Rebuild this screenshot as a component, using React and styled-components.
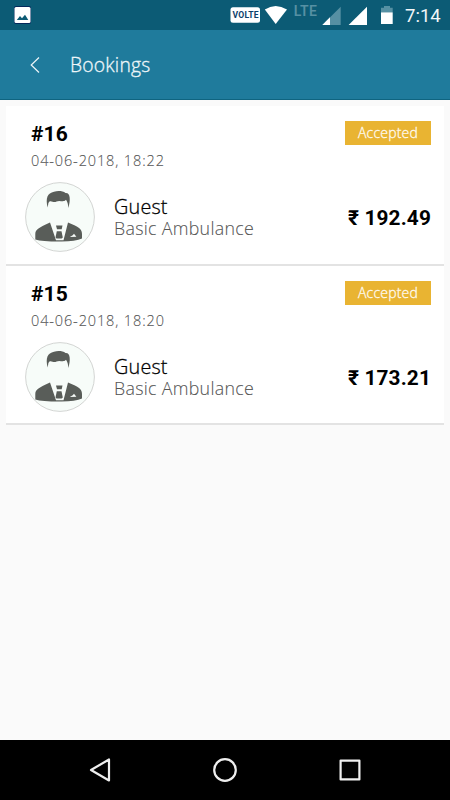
import React from "react";
import styled, { createGlobalStyle } from "styled-components";

const GlobalStyle = createGlobalStyle`
  * {
    box-sizing: border-box;
  }
  body {
    margin: 0;
    background: #fafafa;
    font-family: "Open Sans", "Noto Sans", sans-serif;
  }
`;

const Screen = styled.div`
  display: flex;
  flex-direction: column;
  width: 450px;
  height: 800px;
  overflow: hidden;
  background: #fafafa;
`;

const StatusBar = styled.div`
  display: flex;
  justify-content: space-between;
  height: 30px;
  flex-shrink: 0;
  background: #0c5b75;
`;

const StatusIcons = styled.svg`
  display: block;
`;

const StatusRight = styled.div`
  display: flex;
`;

const Clock = styled.div`
  width: 45px;
  color: #f2f7f9;
  font: 400 18.5px/32px Roboto, sans-serif;
  white-space: nowrap;
`;

const Toolbar = styled.header`
  display: flex;
  align-items: center;
  height: 70px;
  flex-shrink: 0;
  padding-left: 30px;
  background: #1f7b9c;
  border-bottom: 1px solid #0f6480;
`;

const BackIcon = styled.svg`
  width: 10px;
  height: 16px;
  margin-right: 30px;
`;

const Title = styled.h1`
  margin: 0;
  color: #eef6f9;
  font-size: 19.3px;
  font-weight: 300;
  line-height: 26px;
  letter-spacing: 0.2px;
  -webkit-text-stroke: 0.3px;
`;

const List = styled.main`
  flex: 1;
  padding: 6px 6px 0;
`;

const Card = styled.article`
  height: 159.5px;
  padding: 15px 13px 0 19px;
  background: #fff;
  border-bottom: 2px solid #e3e3e3;
`;

const Row = styled.div`
  display: flex;
  justify-content: space-between;
`;

const Heading = styled.div`
  padding-left: 6px;
`;

const BookingId = styled.div`
  color: #000;
  font: 700 21px/26px Roboto, sans-serif;
  letter-spacing: 0.1px;
`;

const BookingDate = styled.div`
  margin-top: 3px;
  color: #555;
  font-size: 14.5px;
  font-weight: 300;
  line-height: 21px;
  letter-spacing: 0.87px;
  -webkit-text-stroke: 0.1px;
`;

const Badge = styled.div`
  width: 86px;
  height: 24px;
  background: #e9b432;
  color: #fffaf0;
  font-size: 14px;
  font-weight: 300;
  line-height: 23px;
  letter-spacing: 0.2px;
  text-align: center;
  -webkit-text-stroke: 0.3px;
`;

const Details = styled.div`
  display: flex;
  align-items: center;
  margin-top: 11px;
`;

const Avatar = styled.svg`
  width: 70px;
  height: 70px;
  margin-right: 19px;
`;

const Person = styled.div`
  flex: 1;
`;

const Name = styled.div`
  color: #000;
  font-size: 19.8px;
  font-weight: 300;
  line-height: 22px;
  letter-spacing: 0.2px;
  padding-top: 1px;
  -webkit-text-stroke: 0.3px;
`;

const Service = styled.div`
  color: #555;
  font-size: 17.8px;
  font-weight: 300;
  line-height: 21px;
  letter-spacing: 0.3px;
  -webkit-text-stroke: 0.1px;
`;

const Price = styled.div`
  padding-top: 2px;
  color: #000;
  font: 700 20.8px/24px Roboto, sans-serif;
  letter-spacing: 0.15px;
  white-space: nowrap;
`;

const NavBar = styled.nav`
  display: flex;
  align-items: center;
  justify-content: space-between;
  height: 60px;
  flex-shrink: 0;
  padding: 0 87px;
  background: #000;
`;

const NavIcon = styled.svg`
  width: 26px;
  height: 26px;
  fill: none;
  stroke: #eee;
  stroke-width: 2.2;
  stroke-linejoin: round;
`;

const SvgLabel = styled.text`
  font-family: Roboto, sans-serif;
  font-weight: ${(props) => props.$weight};
  font-size: ${(props) => props.$size}px;
`;

const bookings = [
  { id: 16, date: "04-06-2018, 18:22", price: "192.49" },
  { id: 15, date: "04-06-2018, 18:20", price: "173.21" },
];

const GuestAvatar = () => (
  <Avatar viewBox="0 0 70 70">
    <circle cx="35" cy="35" r="34.4" fill="#f7fcf9" stroke="#d3d5d3" />
    <g fill="#595d59">
      <path d="M22.7 25.5C20.3 16 22.5 11 29 9.7C33 8.5 38 9 40.5 10.9C45.5 10.4 45.7 18 43.3 26C43.1 22 42.6 20 41 17.8C38 21 35 17.5 31.5 19.6C28 21.5 25.5 17 23.4 21Z" />
      <path d="M10.3 57.5V52C10.3 47.5 14 45.5 25 40.5L31 58.3H38.5L43 40.5C53 44.5 57 46.5 57 52V56.5Q50 59.8 34 59.5Q17 59.5 10.3 57.5Z" />
      <path d="M31 43.5H37.5L36.7 47.3H32Z" />
    </g>
    <path d="M31.8 49.2H36.5L37.8 55.5L36.6 56.5H31.5L30.5 55.5Z" fill="#595d59" />
    <path d="M44.8 55L47.7 53.3L49 51.7L51.4 54.8Z" fill="#f7fcf9" />
  </Avatar>
);

const Booking = ({ id, date, price }) => (
  <Card>
    <Row>
      <Heading>
        <BookingId>#{id}</BookingId>
        <BookingDate>{date}</BookingDate>
      </Heading>
      <Badge>Accepted</Badge>
    </Row>
    <Details>
      <GuestAvatar />
      <Person>
        <Name>Guest</Name>
        <Service>Basic Ambulance</Service>
      </Person>
      <Price>₹ {price}</Price>
    </Details>
  </Card>
);

export default function App() {
  return (
    <Screen>
      <GlobalStyle />
      <StatusBar>
        <StatusIcons width="40" height="30">
          <rect x="14" y="6" width="17" height="18" rx="2" fill="#04285b" />
          <rect x="14.5" y="7" width="16" height="16" rx="1.5" fill="#fff" />
          <path d="M16.8 20L20 16L22 18.2L25 14.7L28.3 20Z" fill="#0c5b75" />
        </StatusIcons>
        <StatusRight>
          <StatusIcons width="175" height="30">
            <rect x="0.5" y="7.2" width="29.5" height="15.6" rx="2.5" fill="#fff" />
            <SvgLabel x="2.6" y="18" $weight="700" $size="8.6" textLength="26" fill="#0d3f6b">
              VOLTE
            </SvgLabel>
            <path d="M34.8 9.4Q45.5 2.4 57 9.4L45.7 24Z" fill="#fff" />
            <SvgLabel x="63.8" y="16.2" $weight="600" $size="14" textLength="23" fill="#5690a3">
              LTE
            </SvgLabel>
            <path d="M92.3 25L110.7 6.7V25Z" fill="#5690a3" />
            <path d="M92.3 25L100 17.3V25Z" fill="#fff" />
            <path d="M118.6 25L137 6.7V25Z" fill="#fff" />
            <path d="M151 12V7.7H154V6H160V7.7H162.7V12Z" fill="#5690a3" />
            <path d="M151 12.3H162.7V24H151Z" fill="#fff" />
          </StatusIcons>
          <Clock>7:14</Clock>
        </StatusRight>
      </StatusBar>
      <Toolbar>
        <BackIcon viewBox="0 0 10 16" fill="none" stroke="#eef6f9" strokeWidth="1.2">
          <path d="M9 0.5L1.2 8L9 15.5" />
        </BackIcon>
        <Title>Bookings</Title>
      </Toolbar>
      <List>
        {bookings.map((booking) => (
          <Booking key={booking.id} {...booking} />
        ))}
      </List>
      <NavBar>
        <NavIcon viewBox="0 0 26 26">
          <path d="M4 13L22 2.5V23.5Z" />
        </NavIcon>
        <NavIcon viewBox="0 0 26 26">
          <circle cx="13" cy="13" r="10.8" />
        </NavIcon>
        <NavIcon viewBox="0 0 26 26">
          <rect x="3.6" y="3.6" width="18.8" height="18.8" />
        </NavIcon>
      </NavBar>
    </Screen>
  );
}
